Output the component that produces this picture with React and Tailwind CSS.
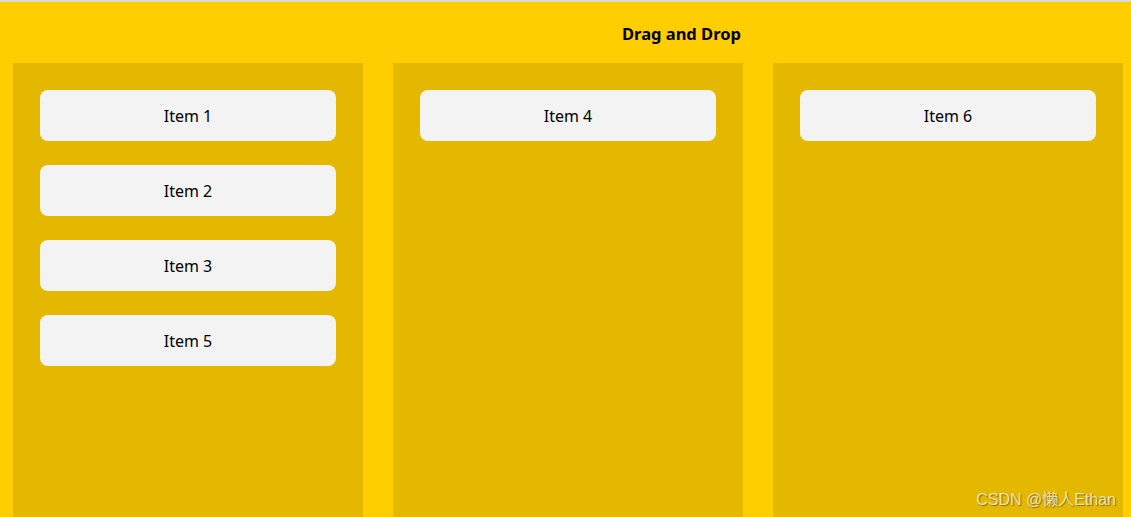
export default function App() {
  const cols = [["Item 1", "Item 2", "Item 3", "Item 5"], ["Item 4"], ["Item 6"]];
  return (
    <div className="relative w-[1131px] h-[517px] overflow-hidden bg-[#ffce00] border-t-2 border-[#dadada]" style={{ fontFamily: '"Noto Sans", "Noto Sans CJK SC", sans-serif' }}>
      <div className="h-[61px] flex items-center justify-center pl-[232px] pt-[4px]">
        <h1 className="text-[16.5px] font-bold text-black leading-none">Drag and Drop</h1>
      </div>
      <div className="flex gap-[30px] pl-[13px]">
        {cols.map((items, i) => (
          <div key={i} className="w-[350px] h-[460px] bg-[#e5b800] px-[27px] pt-[27px] flex flex-col gap-[24px]">
            {items.map((t) => (
              <div key={t} className="h-[51px] rounded-[8px] bg-[#f3f3f3] flex items-center justify-center text-[16px] text-black">
                {t}
              </div>
            ))}
          </div>
        ))}
      </div>
      <div className="absolute right-[15px] bottom-[9px] text-[16px] text-[#f0ead0]/90 leading-none" style={{ textShadow: "1px 1px 1px rgba(80,60,0,0.6)", fontFamily: '"Liberation Sans", "Noto Sans CJK SC", sans-serif' }}>
        CSDN @懒人Ethan
      </div>
    </div>
  );
}
